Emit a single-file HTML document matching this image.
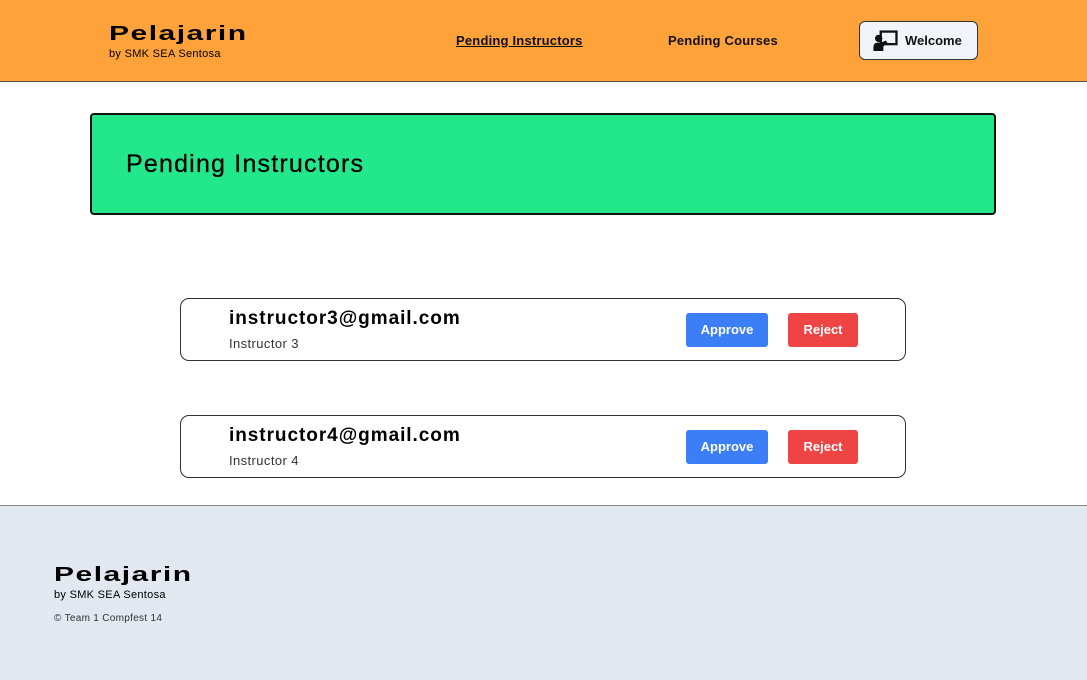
<!DOCTYPE html>
<html><head><style>
*{margin:0;padding:0;box-sizing:border-box}
body{width:1087px;height:680px;font-family:"Liberation Sans",sans-serif;background:#fff;position:relative;overflow:hidden;color:#000}
.hdr{position:absolute;left:0;top:0;width:1087px;height:82px;background:#ffa23a;border-bottom:1px solid #555}
.logo{position:absolute;font-weight:900;letter-spacing:1px;transform:scaleX(1.5);transform-origin:left;line-height:1}
.sub{position:absolute;font-size:11px;letter-spacing:.3px}
.nav{position:absolute;top:33px;font-size:13px;font-weight:bold;color:#111;letter-spacing:.2px}
.btn{position:absolute;left:859px;top:21px;width:119px;height:39px;background:#f1f4f9;border:1px solid #333;border-radius:6px;font-size:13px;font-weight:bold;color:#111}
.hero{position:absolute;left:90px;top:113px;width:906px;height:102px;background:#23e88b;border:2px solid #111;border-radius:4px}
.hero h1{position:absolute;left:34px;top:35px;font-size:25px;font-weight:normal;letter-spacing:1.2px;-webkit-text-stroke:.3px #000}
.card{position:absolute;left:180px;width:726px;height:63px;border:1px solid #333;border-radius:9px}
.card .em{position:absolute;left:48px;top:9px;font-size:19px;font-weight:bold;letter-spacing:.95px}
.card .nm{position:absolute;left:48px;top:37px;font-size:13px;color:#333;letter-spacing:.4px}
.ap,.rj{position:absolute;top:14px;height:34px;border-radius:3px;color:#fff;font-weight:bold;font-size:13px;text-align:center;line-height:34px}
.ap{left:505px;width:82px;background:#3b7ef6}
.rj{left:607px;width:70px;background:#ef4444}
.ftr{position:absolute;left:0;top:505px;width:1087px;height:175px;background:#e1e8f0;border-top:1px solid #888}
</style></head><body>
<div class="hdr">
<div class="logo" style="left:109px;top:24px;font-size:20px">Pelajarin</div>
<div class="sub" style="left:109px;top:48px">by SMK SEA Sentosa</div>
<div class="nav" style="left:456px;text-decoration:underline">Pending Instructors</div>
<div class="nav" style="left:668px">Pending Courses</div>
<div class="btn">
<svg style="position:absolute;left:13px;top:8px" width="26" height="22" viewBox="0 0 24 21"><rect x="7" y="1.5" width="15" height="12" fill="none" stroke="#111" stroke-width="2.2"/><circle cx="5" cy="8" r="3.5" fill="#111"/><path d="M0 20v-4a4 4 0 0 1 4-4h3l5-2 1.5 2.5-4 3v4.5z" fill="#111"/></svg>
<span style="position:absolute;left:45px;top:11px">Welcome</span></div>
</div>
<div class="hero"><h1>Pending Instructors</h1></div>
<div class="card" style="top:298px"><div class="em">instructor3@gmail.com</div><div class="nm">Instructor 3</div><div class="ap">Approve</div><div class="rj">Reject</div></div>
<div class="card" style="top:415px"><div class="em">instructor4@gmail.com</div><div class="nm">Instructor 4</div><div class="ap">Approve</div><div class="rj">Reject</div></div>
<div class="ftr">
<div class="logo" style="left:54px;top:59px;font-size:20px">Pelajarin</div>
<div class="sub" style="left:54px;top:83px">by SMK SEA Sentosa</div>
<div class="sub" style="left:54px;top:107px;font-size:10px;color:#333">© Team 1 Compfest 14</div>
</div>
</body></html>
